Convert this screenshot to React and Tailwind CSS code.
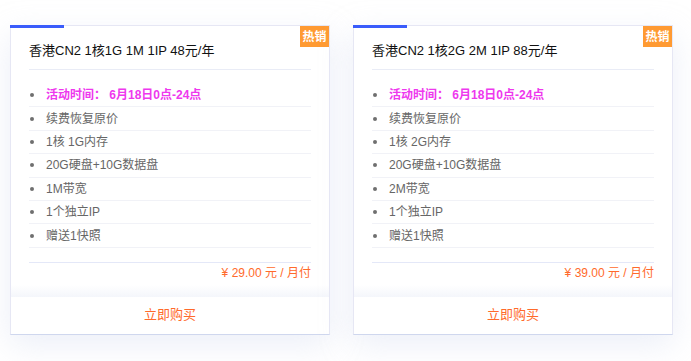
import React from 'react';

const plans = [
  {
    title: '香港CN2 1核1G 1M 1IP 48元/年',
    items: ['续费恢复原价', '1核 1G内存', '20G硬盘+10G数据盘', '1M带宽', '1个独立IP', '赠送1快照'],
    price: '29.00',
  },
  {
    title: '香港CN2 1核2G 2M 1IP 88元/年',
    items: ['续费恢复原价', '1核 2G内存', '20G硬盘+10G数据盘', '2M带宽', '1个独立IP', '赠送1快照'],
    price: '39.00',
  },
];

function Row({ children, hot }) {
  return (
    <li className="h-[23.4px] flex items-center border-b border-[#f1f2f7]">
      <span className="w-[4px] h-[4px] rounded-full bg-[#6f6f6f] ml-[1px] mr-[12px]" />
      <span className={hot ? 'text-[12px] font-bold text-[#ee38ee]' : 'text-[12px] text-[#666]'}>{children}</span>
    </li>
  );
}

function Card({ plan }) {
  return (
    <div className="relative w-[320px] bg-white border border-[#e6e7f4] border-b-[#cfd7ee] shadow-[0_10px_30px_rgba(200,210,235,0.35)]">
      <div className="absolute -top-px -left-px w-[54px] h-[3px] bg-[#3a5cfb]" />
      <div className="absolute top-0 right-0 w-[29px] h-[21px] bg-[#ff9a32] flex items-center justify-center text-white text-[12px] font-bold">
        热销
      </div>
      <div className="px-[18px]">
        <div className="pt-[15px] pb-[8px] leading-[20px] text-[13px] text-[#111] border-b border-[#e9ecf6]">
          {plan.title}
        </div>
        <ul className="pt-[14px]">
          <Row hot>活动时间： 6月18日0点-24点</Row>
          {plan.items.map((it) => (
            <Row key={it}>{it}</Row>
          ))}
        </ul>
        <div className="mt-[14px] border-t border-[#e4e8f8] pb-[2px] text-right leading-[20px] text-[12px] text-[#ff6a2b]">
          ¥ {plan.price} 元 / 月付
        </div>
      </div>
      <div className="h-[12px] bg-gradient-to-b from-white to-[#f4f6fb]" />
      <div className="h-[37px] flex items-center justify-center text-[13px] text-[#ff6a2b]">立即购买</div>
    </div>
  );
}

export default function App() {
  return (
    <div
      className="w-[691px] h-[361px] bg-white flex items-start gap-[23px] pt-[25px] pl-[10px]"
      style={{ fontFamily: '"Liberation Sans", "Noto Sans CJK SC", sans-serif' }}
    >
      {plans.map((p) => (
        <Card key={p.title} plan={p} />
      ))}
    </div>
  );
}
